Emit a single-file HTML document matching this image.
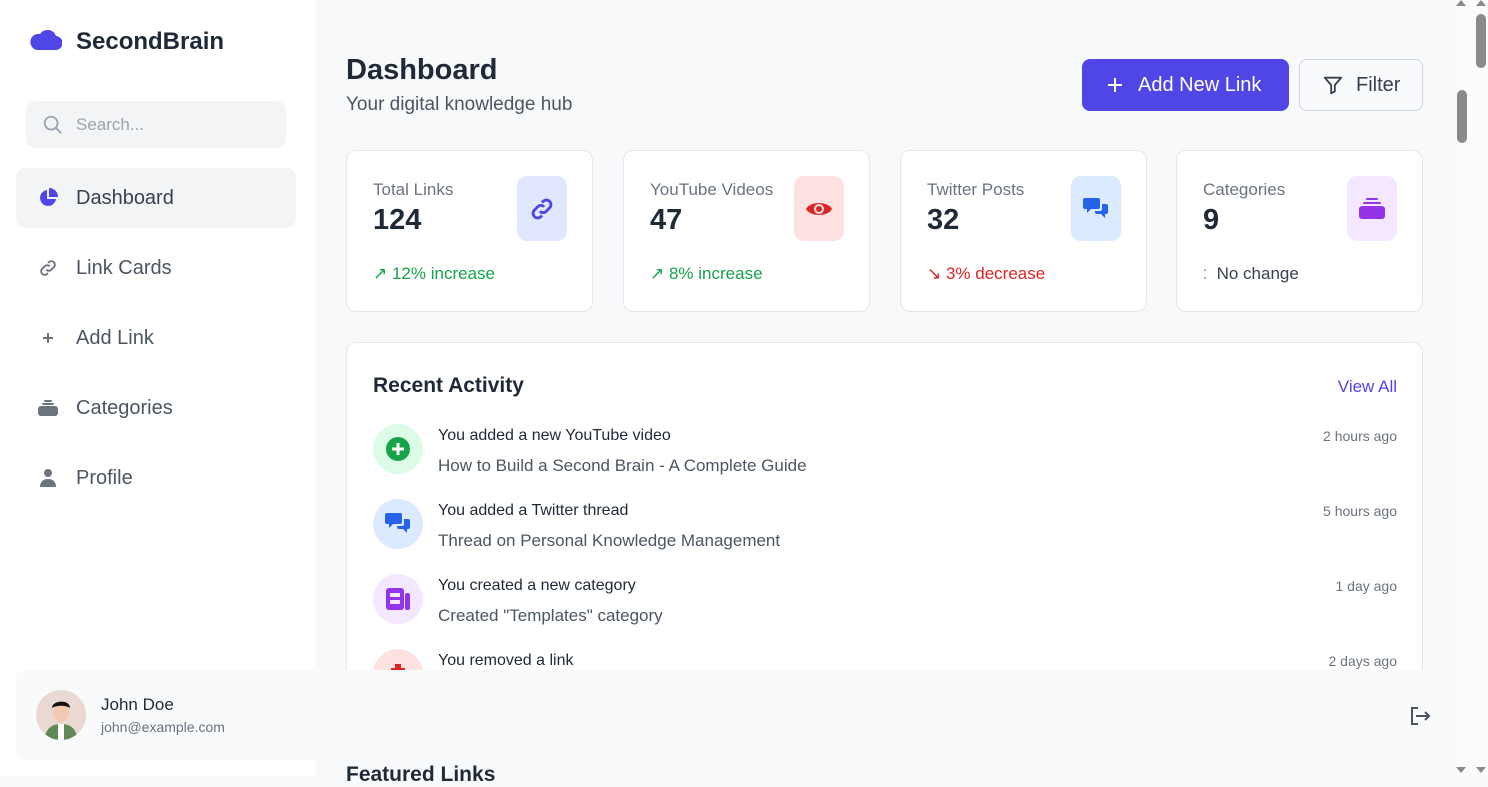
<!DOCTYPE html>
<html><head><meta charset="utf-8"><style>
*{box-sizing:border-box;margin:0;padding:0}
body{width:1488px;height:776px;overflow:hidden;font-family:"Liberation Sans",sans-serif;background:#f9fafb;position:relative;color:#1f2937}
.side{position:absolute;left:0;top:0;width:316px;height:776px;background:#fff}
.logo{position:absolute;left:30px;top:24px;display:flex;align-items:center}
.logo span{font-size:24px;font-weight:bold;color:#1f2937;margin-left:14px;margin-top:4px}
.search{position:absolute;left:26px;top:101px;width:260px;height:47px;background:#f3f4f6;border-radius:10px;display:flex;align-items:center;padding-left:16px;color:#9ca3af;font-size:17px}
.search svg{margin-right:12px}
.nav{position:absolute;left:16px;width:280px;height:60px;border-radius:10px;display:flex;align-items:center;padding-left:22px;font-size:20px;color:#4b5563}
.nav svg{margin-right:18px}
.nav.act{background:#f3f4f6;color:#374151}
.main{position:absolute;left:316px;top:0;width:1138px;height:776px;background:#f8f9fb}
h1{position:absolute;left:346px;top:54px;font-size:29px;font-weight:bold;color:#1f2937}
.sub{position:absolute;left:346px;top:94px;font-size:19px;color:#4b5563}
.btn{position:absolute;top:59px;height:52px;border-radius:8px;display:flex;align-items:center;font-size:20px}
.card{position:absolute;top:150px;width:247px;height:162px;background:#fff;border:1px solid #e5e7eb;border-radius:10px}
.card .t{position:absolute;left:26px;top:29px;font-size:17px;color:#6b7280}
.card .n{position:absolute;left:26px;top:53px;font-size:29px;font-weight:bold;color:#1f2937}
.card .ic{position:absolute;left:170px;top:25px;width:50px;height:65px;border-radius:10px;display:flex;align-items:center;justify-content:center}
.card .c{position:absolute;left:26px;top:113px;font-size:17px}
.act-box{position:absolute;left:346px;top:342px;width:1077px;height:340px;background:#fff;border:1px solid #e5e7eb;border-radius:10px}
.item{position:absolute;left:26px;width:1024px;height:60px}
.item .av{position:absolute;left:0;top:0;width:50px;height:50px;border-radius:50%;display:flex;align-items:center;justify-content:center}
.item .a{position:absolute;left:65px;top:3px;font-size:16px;color:#1f2937}
.item .b{position:absolute;left:65px;top:32px;font-size:17px;color:#4b5563}
.item .tm{position:absolute;right:0;top:4px;font-size:14px;color:#6b7280}
.user{position:absolute;left:16px;top:670px;width:1437px;height:90px;background:#f9fafb;border-radius:8px}
</style></head><body>
<div class="side">
<div class="logo"><svg width="32" height="24" viewBox="0 0 32 24"><path d="M7 22h18a7 7 0 0 0 1-14 9 9 0 0 0-16-2 8 8 0 0 0-3 16z" fill="#4f46e5"/></svg><span>SecondBrain</span></div>
<div class="search"><svg width="22" height="22" viewBox="0 0 24 24" fill="none" stroke="#9ca3af" stroke-width="2"><circle cx="10" cy="10" r="7"/><path d="M15 15l6 6"/></svg>Search...</div>
<div class="nav act" style="top:168px"><svg width="20" height="20" viewBox="0 0 20 20"><path d="M9 2a8 8 0 1 0 9 9H9z" fill="#4f46e5"/><path d="M11 0v9h9a9 9 0 0 0-9-9z" fill="#4f46e5"/></svg>Dashboard</div>
<div class="nav" style="top:238px"><svg width="20" height="20" viewBox="0 0 24 24" fill="none" stroke="#6b7280" stroke-width="2.2"><path d="M10 14a4 4 0 0 0 6 0l3-3a4 4 0 0 0-6-6l-1 1"/><path d="M14 10a4 4 0 0 0-6 0l-3 3a4 4 0 0 0 6 6l1-1"/></svg>Link Cards</div>
<div class="nav" style="top:308px"><svg width="20" height="20" viewBox="0 0 20 20" stroke="#6b7280" stroke-width="2"><path d="M10 5v10M5 10h10"/></svg>Add Link</div>
<div class="nav" style="top:378px"><svg width="20" height="20" viewBox="0 0 20 20" fill="#6b7280"><rect x="6" y="2" width="8" height="2" rx="1"/><rect x="4" y="5" width="12" height="2" rx="1"/><rect x="0" y="8" width="20" height="10" rx="3"/></svg>Categories</div>
<div class="nav" style="top:448px"><svg width="20" height="20" viewBox="0 0 20 20" fill="#6b7280"><circle cx="10" cy="5" r="4"/><path d="M2 19c0-5 3-8 8-8s8 3 8 8z"/></svg>Profile</div>
</div>
<div class="main"></div>
<h1>Dashboard</h1>
<div class="sub">Your digital knowledge hub</div>
<div class="btn" style="left:1082px;width:207px;background:#4f46e5;color:#fff;padding-left:24px"><svg width="18" height="18" viewBox="0 0 18 18" stroke="#fff" stroke-width="2"><path d="M9 2v14M2 9h14"/></svg><span style="margin-left:14px">Add New Link</span></div>
<div class="btn" style="left:1299px;width:124px;background:#f9fafb;border:1px solid #d1d5db;color:#374151;padding-left:22px"><svg width="22" height="22" viewBox="0 0 24 24" fill="none" stroke="#374151" stroke-width="2" stroke-linejoin="round"><path d="M3 4h18l-7 8v7l-4 2v-9z"/></svg><span style="margin-left:12px">Filter</span></div>

<div class="card" style="left:346px"><div class="t">Total Links</div><div class="n">124</div><div class="ic" style="background:#e0e7ff"><svg width="26" height="26" viewBox="0 0 24 24" fill="none" stroke="#4f46e5" stroke-width="2.6"><path d="M10 14a4 4 0 0 0 6 0l3-3a4 4 0 0 0-6-6l-1 1"/><path d="M14 10a4 4 0 0 0-6 0l-3 3a4 4 0 0 0 6 6l1-1"/></svg></div><div class="c" style="color:#16a34a">↗ 12% increase</div></div>
<div class="card" style="left:623px"><div class="t">YouTube Videos</div><div class="n">47</div><div class="ic" style="background:#fee2e2"><svg width="28" height="20" viewBox="0 0 28 20"><path d="M1 10C5 2 23 2 27 10 23 18 5 18 1 10z" fill="#dc2626"/><circle cx="14" cy="10" r="5" fill="#fee2e2"/><circle cx="14" cy="10" r="3" fill="#dc2626"/></svg></div><div class="c" style="color:#16a34a">↗ 8% increase</div></div>
<div class="card" style="left:900px"><div class="t">Twitter Posts</div><div class="n">32</div><div class="ic" style="background:#dbeafe"><svg width="26" height="24" viewBox="0 0 26 24" fill="#2563eb"><path d="M2 1h13a2 2 0 0 1 2 2v7a2 2 0 0 1-2 2H8l-4 4v-4H2a2 2 0 0 1-2-2V3a2 2 0 0 1 2-2z"/><path d="M19 7h4a2 2 0 0 1 2 2v6a2 2 0 0 1-2 2h-1v4l-4-4h-4a2 2 0 0 1-2-2v-1h5a2 2 0 0 0 2-2z"/></svg></div><div class="c" style="color:#dc2626">↘ 3% decrease</div></div>
<div class="card" style="left:1176px"><div class="t">Categories</div><div class="n">9</div><div class="ic" style="background:#f3e8ff"><svg width="26" height="22" viewBox="0 0 26 22" fill="#9333ea"><rect x="7" y="0" width="12" height="2" rx="1"/><rect x="4" y="4" width="18" height="2" rx="1"/><rect x="0" y="8" width="26" height="13" rx="3"/></svg></div><div class="c" style="color:#374151"><span style="font-size:13px;color:#6b7280">⁚</span>&nbsp; No change</div></div>

<div class="act-box">
<div style="position:absolute;left:26px;top:31px;font-size:21px;font-weight:bold;color:#1f2937">Recent Activity</div>
<div style="position:absolute;right:25px;top:34px;font-size:17px;color:#4f46e5">View All</div>
<div class="item" style="top:81px"><div class="av" style="background:#dcfce7"><svg width="24" height="24" viewBox="0 0 24 24"><circle cx="12" cy="12" r="12" fill="#16a34a"/><path d="M12 6v12M6 12h12" stroke="#fff" stroke-width="3"/></svg></div><div class="a">You added a new YouTube video</div><div class="b">How to Build a Second Brain - A Complete Guide</div><div class="tm">2 hours ago</div></div>
<div class="item" style="top:156px"><div class="av" style="background:#dbeafe"><svg width="26" height="24" viewBox="0 0 26 24" fill="#2563eb"><path d="M2 1h13a2 2 0 0 1 2 2v7a2 2 0 0 1-2 2H8l-4 4v-4H2a2 2 0 0 1-2-2V3a2 2 0 0 1 2-2z"/><path d="M19 7h4a2 2 0 0 1 2 2v6a2 2 0 0 1-2 2h-1v4l-4-4h-4a2 2 0 0 1-2-2v-1h5a2 2 0 0 0 2-2z"/></svg></div><div class="a">You added a Twitter thread</div><div class="b">Thread on Personal Knowledge Management</div><div class="tm">5 hours ago</div></div>
<div class="item" style="top:231px"><div class="av" style="background:#f3e8ff"><svg width="24" height="22" viewBox="0 0 24 22"><rect x="0" y="0" width="18" height="22" rx="3" fill="#9333ea"/><rect x="19" y="5" width="5" height="17" rx="2" fill="#9333ea"/><rect x="4" y="5" width="10" height="4" fill="#f3e8ff"/><rect x="4" y="12" width="10" height="4" fill="#f3e8ff"/></svg></div><div class="a">You created a new category</div><div class="b">Created "Templates" category</div><div class="tm">1 day ago</div></div>
<div class="item" style="top:306px"><div class="av" style="background:#fee2e2"><svg width="20" height="20" viewBox="0 0 20 20"><rect x="3" y="4" width="14" height="14" fill="#dc2626"/><rect x="7" y="0" width="6" height="4" fill="#dc2626"/></svg></div><div class="a">You removed a link</div><div class="tm">2 days ago</div></div>
</div>
<div style="position:absolute;left:346px;top:763px;font-size:21px;font-weight:bold;color:#1f2937">Featured Links</div>
<div class="user">
<div style="position:absolute;left:20px;top:20px;width:50px;height:50px;border-radius:50%;background:#ead9d3;overflow:hidden"><svg width="50" height="50" viewBox="0 0 50 50"><path d="M8 50c2-12 8-16 17-16s15 4 17 16z" fill="#5f8a55"/><path d="M22 34h6v16h-6z" fill="#fff"/><ellipse cx="25" cy="22" rx="8" ry="10" fill="#f3c9b2"/><path d="M16 18c0-8 18-9 18 0-4-3-14-3-18 0z" fill="#111"/></svg></div>
<div style="position:absolute;left:85px;top:25px;font-size:17px;color:#1f2937">John Doe</div>
<div style="position:absolute;left:85px;top:49px;font-size:14px;color:#6b7280">john@example.com</div>
<svg style="position:absolute;left:1392px;top:35px" width="24" height="22" viewBox="0 0 24 22" fill="none" stroke="#4b5563" stroke-width="2"><path d="M10 3H4v16h6"/><path d="M8 11h13M17 7l4 4-4 4"/></svg>
</div>
<div style="position:absolute;left:1454px;top:0;width:34px;height:776px;background:#fbfbfb"></div>
<div style="position:absolute;left:1457px;top:90px;width:10px;height:53px;border-radius:5px;background:#8a8a8a"></div>
<div style="position:absolute;left:1476px;top:14px;width:10px;height:54px;border-radius:5px;background:#8a8a8a"></div>
<div style="position:absolute;left:1456px;top:0;border:5px solid transparent;border-bottom:6px solid #8a8a8a;border-top:0"></div>
<div style="position:absolute;left:1476px;top:0;border:5px solid transparent;border-bottom:6px solid #8a8a8a;border-top:0"></div>
<div style="position:absolute;left:1456px;top:767px;border:5px solid transparent;border-top:6px solid #8a8a8a;border-bottom:0"></div>
<div style="position:absolute;left:1476px;top:767px;border:5px solid transparent;border-top:6px solid #8a8a8a;border-bottom:0"></div>
</body></html>
